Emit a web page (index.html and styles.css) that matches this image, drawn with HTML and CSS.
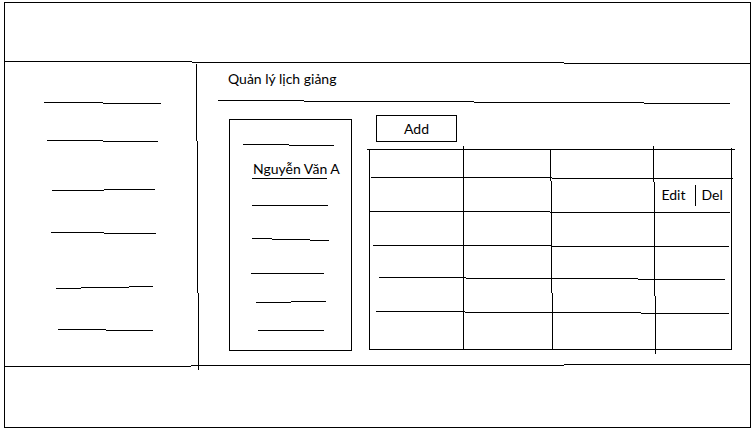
FILE: index.html
```html
<!DOCTYPE html>
<html lang="vi">
<head>
<meta charset="utf-8">
<meta name="viewport" content="width=device-width, initial-scale=1">
<title>Quản lý lịch giảng</title>
<link rel="stylesheet" href="styles.css">
</head>
<body>
<div class="frame">
  <header class="banner"></header>
  <svg class="rule" viewBox="0 0 745 3" preserveAspectRatio="none" aria-hidden="true"><path d="M0 .5H187M187 1.5H559M559 2.5H745"/></svg>

  <div class="body">
    <nav class="sidebar">
      <ul class="menu">
        <li><svg class="stroke" viewBox="0 0 191 3" preserveAspectRatio="none" aria-hidden="true"><path d="M39 1.5H98M98 2.5H156"/></svg></li>
        <li><svg class="stroke" viewBox="0 0 191 3" preserveAspectRatio="none" aria-hidden="true"><path d="M42 1.5H98M98 2.5H153"/></svg></li>
        <li><svg class="stroke" viewBox="0 0 191 3" preserveAspectRatio="none" aria-hidden="true"><path d="M47 2.5H99M99 1.5H150"/></svg></li>
        <li><svg class="stroke" viewBox="0 0 191 3" preserveAspectRatio="none" aria-hidden="true"><path d="M46 1.5H99M99 2.5H151"/></svg></li>
        <li><svg class="stroke" viewBox="0 0 191 3" preserveAspectRatio="none" aria-hidden="true"><path d="M51 2.5H76M76 1.5H124M124 .5H148"/></svg></li>
        <li><svg class="stroke" viewBox="0 0 191 3" preserveAspectRatio="none" aria-hidden="true"><path d="M53 1.5H101M101 2.5H148"/></svg></li>
      </ul>
    </nav>
    <div class="divider">
      <svg class="divider-line" viewBox="0 0 3 306" preserveAspectRatio="none" aria-hidden="true"><path d="M.5 0V77M1.5 77V229M2.5 229V306"/></svg>
    </div>

    <main class="main">
      <h1 class="title">Quản lý lịch giảng</h1>
      <svg class="title-line" viewBox="0 0 512 4" preserveAspectRatio="none" aria-hidden="true"><path d="M0 .5H86M86 1.5H256M256 2.5H426M426 3.5H512"/></svg>

      <div class="content">
        <ul class="people">
          <li><svg class="stroke" viewBox="0 0 121 3" preserveAspectRatio="none" aria-hidden="true"><path d="M13 1.5H59M59 2.5H104"/></svg></li>
          <li><a class="person" href="#">Nguyễn Văn A</a><svg class="stroke" viewBox="0 0 121 3" preserveAspectRatio="none" aria-hidden="true"><path d="M22 2.5H97"/></svg></li>
          <li><svg class="stroke" viewBox="0 0 121 3" preserveAspectRatio="none" aria-hidden="true"><path d="M22 2.5H98"/></svg></li>
          <li><svg class="stroke" viewBox="0 0 121 3" preserveAspectRatio="none" aria-hidden="true"><path d="M22 .5H42M42 1.5H80M80 2.5H99"/></svg></li>
          <li><svg class="stroke" viewBox="0 0 121 3" preserveAspectRatio="none" aria-hidden="true"><path d="M21 2.5H94"/></svg></li>
          <li><svg class="stroke" viewBox="0 0 121 3" preserveAspectRatio="none" aria-hidden="true"><path d="M26 2.5H61M61 1.5H96"/></svg></li>
          <li><svg class="stroke" viewBox="0 0 121 3" preserveAspectRatio="none" aria-hidden="true"><path d="M28 2.5H94"/></svg></li>
        </ul>

        <section class="schedule">
          <button class="add" type="button">Add</button>
          <div class="grid">
            <table class="table">
              <colgroup><col class="col-a"><col class="col-b"><col class="col-c"><col class="col-d"></colgroup>
              <tbody>
                <tr class="row-head"><td></td><td></td><td></td><td></td></tr>
                <tr class="row"><td></td><td></td><td></td><td><div class="actions"><button class="action" type="button">Edit</button><button class="action action-del" type="button">Del</button></div></td></tr>
                <tr class="row"><td></td><td></td><td></td><td></td></tr>
                <tr class="row"><td></td><td></td><td></td><td></td></tr>
                <tr class="row"><td></td><td></td><td></td><td></td></tr>
                <tr class="row"><td></td><td></td><td></td><td></td></tr>
              </tbody>
            </table>
            <svg class="grid-lines" viewBox="0 0 368 208" preserveAspectRatio="none" aria-hidden="true">
              <path d="M0 3.5H368M2 203.5H365"/>
              <path d="M4 31.5H185M185 32.5H366"/>
              <path d="M3 65.5H183M183 66.5H363"/>
              <path d="M6 99.5H184M184 100.5H362"/>
              <path d="M12 131.5H99M99 132.5H271M271 133.5H358"/>
              <path d="M9 165.5H98M98 166.5H274M274 167.5H362"/>
              <path d="M2.5 3V204M96.5 0V204M364.5 2V204"/>
              <path d="M183.5 3V35M184.5 35V147M185.5 147V204"/>
              <path d="M286.5 0V36M287.5 36V150M288.5 150V208"/>
            </svg>
          </div>
        </section>
      </div>
    </main>
  </div>

  <svg class="rule" viewBox="0 0 745 3" preserveAspectRatio="none" aria-hidden="true"><path d="M0 2.5H186M186 1.5H559M559 .5H745"/></svg>
  <footer class="footer"></footer>
</div>
</body>
</html>
```
FILE: styles.css
```css
* {
  box-sizing: border-box;
}

body {
  margin: 0;
  min-height: 100vh;
  padding: 2px 5px 3px 4px;
  display: grid;
  background: #fff;
  color: #000;
  font: 14px/16px Lato, "Noto Sans", sans-serif;
}

ul {
  margin: 0;
  padding: 0;
  list-style: none;
}

svg {
  display: block;
  fill: none;
  stroke: #000;
  stroke-width: 1px;
  shape-rendering: crispEdges;
}

button {
  padding: 0;
  border: 0;
  background: none;
  color: inherit;
  font: inherit;
  cursor: pointer;
}

.frame {
  display: grid;
  grid-template-rows: 58px 3px 1fr 3px 60px;
  border: 1px solid #000;
}

.rule {
  width: 100%;
  height: 3px;
}

.body {
  display: grid;
  grid-template-columns: 191px 3px 1fr;
}

.menu {
  display: grid;
  grid-template-rows: 40px 38px 49px 43px 55px 42px;
}

.menu li,
.people li {
  display: flex;
  flex-direction: column;
  justify-content: flex-end;
}

.stroke {
  width: 100%;
  height: 3px;
}

.divider {
  position: relative;
}

/* The divider runs a little way into the footer. */
.divider-line {
  position: absolute;
  inset: 0 0 -6px;
  width: 3px;
  height: calc(100% + 6px);
}

.main {
  padding: 0 15px 0 19px;
}

.title {
  margin: 0;
  padding: 5px 10px 11px;
  font-size: 14px;
  font-weight: 400;
  line-height: 20px;
}

.title-line {
  width: calc(100% - 5px);
  height: 4px;
}

.content {
  display: flex;
  align-items: flex-start;
  gap: 15px;
  padding: 11px 0 0 11px;
}

.people {
  flex: none;
  display: grid;
  grid-template-rows: 26px 33px 27px 35px 33px 29px 28px;
  width: 123px;
  margin-top: 4px;
  padding-bottom: 19px;
  border: 1px solid #000;
}

.person {
  padding-left: 23px;
  color: inherit;
  line-height: 14px;
  text-decoration: none;
  white-space: nowrap;
}

.schedule {
  flex: 1;
}

.add {
  display: block;
  width: 81px;
  height: 27px;
  margin-left: 9px;
  border: 1px solid #000;
}

.grid {
  position: relative;
  margin-top: 4px;
  padding: 3px 3px 4px 2px;
}

.grid-lines {
  position: absolute;
  inset: 0;
  width: 100%;
  height: 100%;
  pointer-events: none;
}

.table {
  width: 100%;
  border-collapse: collapse;
  table-layout: fixed;
}

.table td {
  padding: 0;
}

.col-a { width: 26%; }
.col-b { width: 24%; }
.col-c { width: 28%; }
.col-d { width: 22%; }

.row-head {
  height: 29px;
}

.row {
  height: 34px;
}

.row:last-child {
  height: 36px;
}

.actions {
  display: flex;
  justify-content: center;
}

.action {
  padding: 2px 10px 3px 0;
}

.action-del {
  padding: 2px 0 3px 5px;
  border-left: 1px solid #000;
}
```
